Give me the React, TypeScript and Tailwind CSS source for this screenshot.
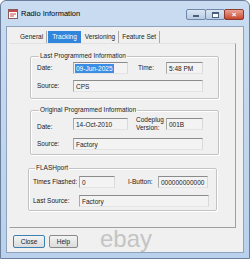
import React from "react";

const tabs = ["General", "Tracking", "Versioning", "Feature Set"];

function Field({ className, value, selected }: { className: string; value: string; selected?: boolean }) {
  return (
    <div
      className={`flex h-[12px] items-center border border-t-[#8b8b8b] border-l-[#a9a9a9] border-r-[#d9d9d9] border-b-[#e4e4e4] bg-[#f3f3f3] pl-[1px] ${className}`}
    >
      <span className={selected ? "bg-[#3a8ee6] px-[1px] leading-[9px] text-white" : "px-[1px] leading-[9px] text-[#222]"}>
        {value}
      </span>
    </div>
  );
}

function Group({ title, className, children }: { title: string; className: string; children: React.ReactNode }) {
  return (
    <fieldset className={`w-[189px] rounded-[2px] border border-[#c3c3c3] shadow-[inset_1px_1px_0_#fff,1px_1px_0_#fff] ${className}`}>
      <legend className="ml-[2px] px-[1px] leading-[8px] text-[#222]">{title}</legend>
      {children}
    </fieldset>
  );
}

function CaptionButton({ className, children }: { className: string; children?: React.ReactNode }) {
  return (
    <div
      className={`flex h-[11px] w-[20px] items-center justify-center rounded-[2px] border ${className}`}
    >
      {children}
    </div>
  );
}

export default function App() {
  return (
    <div
      className="relative flex h-[259px] w-[250px] flex-col overflow-hidden whitespace-nowrap rounded-t-[6px] border border-[#6b7f9c] bg-gradient-to-b from-[#c9dcf1] to-[#b9d1ec] px-[5px] pb-[5px] text-[6.5px] text-[#1a1a1a]"
      style={{ fontFamily: '"Liberation Sans", Arial, sans-serif' }}
    >
      {/* title bar */}
      <div className="flex h-[25px] items-start pl-[2px] pt-[7px]">
        <svg width="10" height="10" viewBox="0 0 10 10" className="mt-[1px]">
          <rect x="0.5" y="0.5" width="9" height="9" fill="#fff" stroke="#8a5a5a" />
          <rect x="1" y="1" width="8" height="2" fill="#c24a4a" />
          <path d="M2 5h6M2 7h4" stroke="#c24a4a" strokeWidth="1" />
        </svg>
        <span className="ml-[3px] text-[7.5px] leading-[12px] text-black">Radio Information</span>
        <div className="ml-auto flex pt-[1px]">
          <CaptionButton className="border-[#6f87a8] bg-gradient-to-b from-[#dbe6f3] to-[#b7cbe3]">
            <div className="mt-[3px] h-[2px] w-[6px] border border-[#4a5f7c] bg-white" />
          </CaptionButton>
          <CaptionButton className="-ml-px border-[#6f87a8] bg-gradient-to-b from-[#dbe6f3] to-[#b7cbe3]">
            <div className="h-[6px] w-[7px] border border-[#4a5f7c] border-t-2 bg-white" />
          </CaptionButton>
          <CaptionButton className="-ml-px border-[#8a3a2e] bg-gradient-to-b from-[#e9a392] to-[#c7452b] text-[8px] font-bold leading-none text-white">
            ×
          </CaptionButton>
        </div>
      </div>

      {/* client area */}
      <div className="flex flex-1 flex-col border border-[#8ea3bd] bg-[#f0f0f0]">
        <div className="mt-[4px] flex h-[12px] pl-[10px]">
          {tabs.map((t) => (
            <div
              key={t}
              className={
                t === "Tracking"
                  ? "mx-[1px] flex items-center bg-[#2f86dc] px-[4px] text-white"
                  : "flex items-center border-r border-[#a8a8a8] px-[3px] text-[#222]"
              }
            >
              {t}
            </div>
          ))}
        </div>

        <div className="ml-[2px] mr-[7px] flex h-[185px] flex-col border border-t-[#e2e2e2] border-l-[#f0f0f0] border-r-[#a0a0a0] border-b-[#a0a0a0] pl-[20px] pt-[8px]">
          <Group title="Last Programmed Information" className="pb-[6px] pl-[6px]">
            <div className="mt-[2px] flex items-center">
              <span className="w-[36px]">Date:</span>
              <Field className="w-[55px]" value="09-Jun-2025" selected />
              <span className="ml-[10px] w-[28px]">Time:</span>
              <Field className="w-[37px]" value="5:48 PM" />
            </div>
            <div className="mt-[6px] flex items-center">
              <span className="w-[36px]">Source:</span>
              <Field className="w-[130px]" value="CPS" />
            </div>
          </Group>

          <Group title="Original Programmed Information" className="mt-[7px] pb-[4px] pl-[6px]">
            <div className="mt-[2px] flex h-[16px] items-center">
              <span className="w-[36px] self-end">Date:</span>
              <Field className="w-[55px]" value="14-Oct-2010" />
              <span className="ml-[8px] w-[30px] leading-[8px]">
                Codeplug
                <br />
                Version:
              </span>
              <Field className="w-[37px]" value="001B" />
            </div>
            <div className="mt-[6px] flex items-center">
              <span className="w-[36px]">Source:</span>
              <Field className="w-[130px]" value="Factory" />
            </div>
          </Group>

          <Group title="FLASHport" className="-ml-[2px] mt-[9px] pb-[3px] pl-[4px]">
            <div className="mt-[4px] flex items-center">
              <span className="w-[46px]">Times Flashed:</span>
              <Field className="w-[36px]" value="0" />
              <span className="ml-[13px] w-[30px]">I-Button:</span>
              <Field className="w-[50px]" value="000000000000" />
            </div>
            <div className="mt-[7px] flex items-center">
              <span className="w-[46px]">Last Source:</span>
              <Field className="w-[130px]" value="Factory" />
            </div>
          </Group>
        </div>

        <div className="ml-[6px] mt-[7px] flex gap-[4px]">
          <div className="flex h-[13px] w-[32px] items-center justify-center rounded-[2px] border border-[#3c7fb1] bg-gradient-to-b from-[#f4f4f4] to-[#dcdcdc] text-[#222]">
            Close
          </div>
          <div className="flex h-[13px] w-[29px] items-center justify-center rounded-[2px] border border-[#8a8a8a] bg-gradient-to-b from-[#f4f4f4] to-[#dcdcdc] text-[#222]">
            Help
          </div>
        </div>
      </div>

      <span className="pointer-events-none absolute left-[99px] top-[226px] text-[24px] leading-none text-[#a8a8a8] opacity-60">
        ebay
      </span>
    </div>
  );
}
